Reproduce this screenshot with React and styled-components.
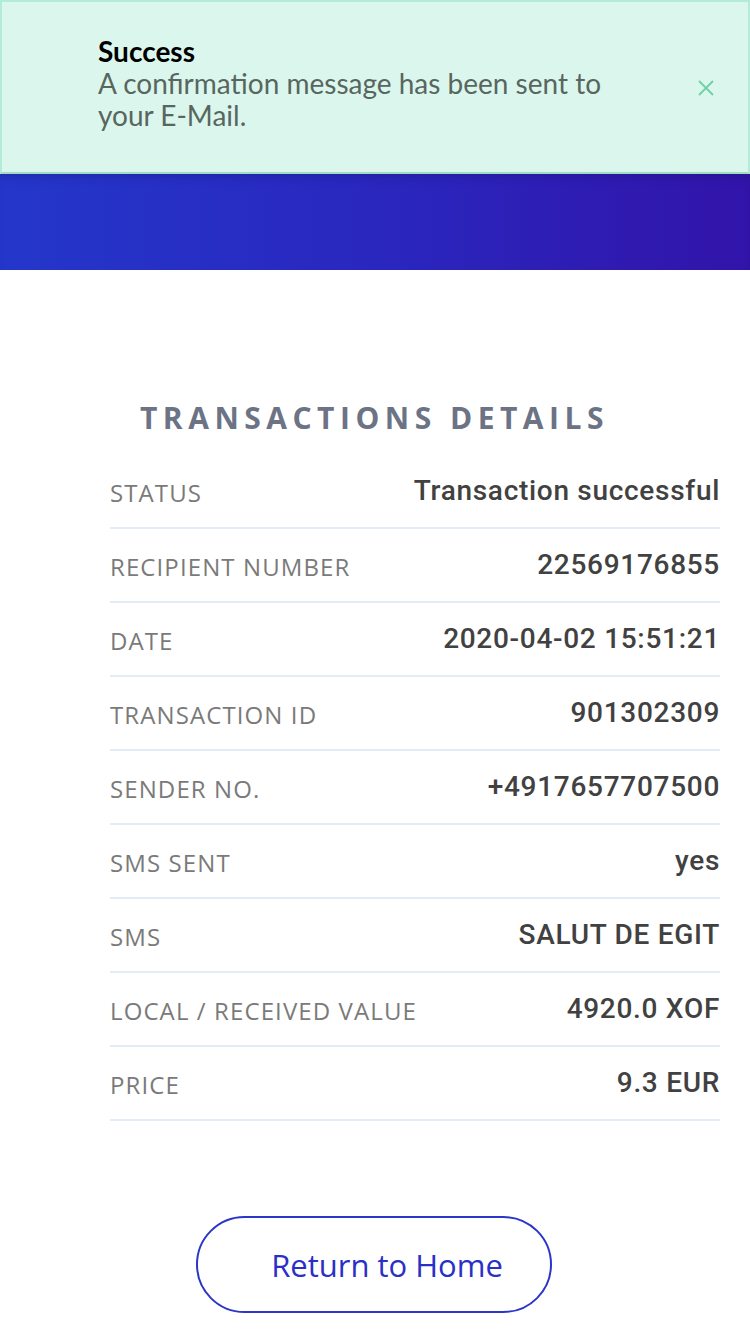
import React from 'react';
import styled, { createGlobalStyle } from 'styled-components';

const GlobalStyle = createGlobalStyle`
  html, body { margin: 0; padding: 0; background: #fff; }
  body { font-family: "Open Sans", "Liberation Sans", sans-serif; }
`;

const Page = styled.div`
  width: 750px;
  min-height: 1334px;
  display: flex;
  flex-direction: column;
`;

const Toast = styled.div`
  box-sizing: border-box;
  height: 174px;
  background: #dbf7ed;
  border: 2px solid #b3ecd6;
  border-bottom-color: #9fdcc3;
  display: flex;
  align-items: center;
  padding: 0 32px 0 96px;
  font-family: Lato, "Liberation Sans", sans-serif;
`;

const ToastBody = styled.div`
  flex: 1;
  margin-top: -8px;
`;

const ToastTitle = styled.div`
  font-size: 28px;
  font-weight: 700;
  color: #000;
  line-height: 32px;
`;

const ToastText = styled.div`
  font-size: 28px;
  line-height: 32px;
  color: #596660;
  max-width: 540px;
`;

const Close = styled.button`
  border: 0;
  background: none;
  padding: 0;
  margin-top: 2px;
  width: 20px;
  height: 20px;
  display: flex;
  cursor: pointer;
`;

const Banner = styled.div`
  height: 96px;
  background: linear-gradient(90deg, #2437ca 0%, #2a25bd 55%, #3214a9 100%);
  box-shadow: inset 0 8px 10px -6px rgba(20, 20, 100, 0.35);
`;

const Details = styled.div`
  padding: 130px 30px 0 110px;
  display: flex;
  flex-direction: column;
`;

const Heading = styled.h2`
  margin: 0 0 0 30px;
  font-size: 30px;
  font-weight: 700;
  letter-spacing: 5.5px;
  color: #6b7385;
  line-height: 36px;
`;

const Rows = styled.div`
  margin-top: 19px;
`;

const Row = styled.div`
  height: 72px;
  border-bottom: 2px solid #e2ebf6;
  display: flex;
  align-items: center;
  justify-content: space-between;
`;

const Label = styled.span`
  font-size: 24px;
  letter-spacing: 1.1px;
  color: #7a7a7a;
  text-transform: uppercase;
  margin-top: 2px;
`;

const Value = styled.span`
  font-family: Roboto, "Open Sans", sans-serif;
  font-size: 28px;
  font-weight: 500;
  letter-spacing: 0.7px;
  color: #414141;
  margin-top: -2px;
`;

const ButtonWrap = styled.div`
  display: flex;
  justify-content: center;
  padding-top: 95px;
`;

const HomeButton = styled.button`
  box-sizing: border-box;
  width: 356px;
  height: 97px;
  margin-right: 2px;
  border: 2px solid #2b35c8;
  border-radius: 49px;
  background: #fff;
  color: #2a2fc7;
  font-family: "Open Sans", sans-serif;
  font-size: 31px;
  font-weight: 500;
  padding: 0 0 0 26px;
  cursor: pointer;
`;

const rows = [
  ['Status', 'Transaction successful'],
  ['Recipient number', '22569176855'],
  ['Date', '2020-04-02 15:51:21'],
  ['Transaction ID', '901302309'],
  ['Sender No.', '+4917657707500'],
  ['SMS sent', 'yes'],
  ['SMS', 'SALUT DE EGIT'],
  ['Local / received value', '4920.0 XOF'],
  ['Price', '9.3 EUR'],
];

export default function App() {
  return (
    <>
      <GlobalStyle />
      <Page>
        <Toast>
          <ToastBody>
            <ToastTitle>Success</ToastTitle>
            <ToastText>A confirmation message has been sent to your E-Mail.</ToastText>
          </ToastBody>
          <Close aria-label="close">
            <svg width="20" height="20" viewBox="0 0 20 20">
              <path d="M3 3 L17 17 M17 3 L3 17" stroke="#6fd0a8" strokeWidth="1.8" fill="none" />
            </svg>
          </Close>
        </Toast>
        <Banner />
        <Details>
          <Heading>TRANSACTIONS DETAILS</Heading>
          <Rows>
            {rows.map(([label, value]) => (
              <Row key={label}>
                <Label>{label}</Label>
                <Value>{value}</Value>
              </Row>
            ))}
          </Rows>
        </Details>
        <ButtonWrap>
          <HomeButton>Return to Home</HomeButton>
        </ButtonWrap>
      </Page>
    </>
  );
}
